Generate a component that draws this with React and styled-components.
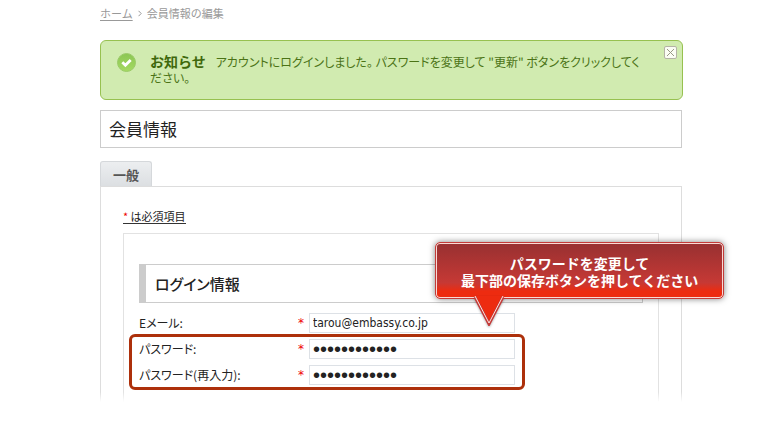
import React from 'react';
import styled, { createGlobalStyle } from 'styled-components';

const GlobalStyle = createGlobalStyle`
  *, *::before, *::after { box-sizing: border-box; }
  body {
    margin: 0;
    background: #fff;
    color: #222;
    font: 12px/16px "Noto Sans CJK JP", sans-serif;
    font-feature-settings: "palt";
  }
`;

const Page = styled.main`
  padding: 5px 91px 0 100px;
`;

const Breadcrumb = styled.nav`
  display: flex;
  align-items: center;
  gap: 5px;
  height: 16px;
  margin-bottom: 19px;
  color: #999;
  font-size: 11px;
  font-feature-settings: normal;
  a { color: #999; text-decoration: underline; text-underline-offset: 2px; }
`;

const Notice = styled.section`
  display: flex;
  align-items: flex-start;
  height: 60px;
  margin-right: -1px;
  padding: 11px 5px 0 16px;
  border: 1px solid #97c150;
  border-radius: 6px;
  background: #d1ebb0;
  color: #4b7316;
`;

const CheckIcon = styled.svg`
  flex: none;
  width: 20px;
  height: 20px;
`;

const NoticeText = styled.p`
  flex: 1;
  margin: 1px 14px 0 13px;
  font-size: 12px;
  line-height: 16px;
  strong {
    margin-right: 10px;
    font-size: 14px;
    font-feature-settings: normal;
    color: #3f680c;
  }
`;

const CloseButton = styled.button`
  flex: none;
  display: flex;
  align-items: center;
  justify-content: center;
  width: 13px;
  height: 13px;
  margin-top: -6px;
  padding: 0;
  border: 1px solid #b5b3a6;
  border-radius: 2px;
  background: #fbfdf4;
`;

const PageTitle = styled.h1`
  height: 38px;
  margin: 10px 0 13px;
  padding: 0 8px;
  border: 1px solid #ccc;
  font-size: 17px;
  font-weight: 400;
  line-height: 36px;
`;

const Tab = styled.button`
  display: block;
  height: 25px;
  padding: 2px 12px 0;
  border: 1px solid #d5d8db;
  border-bottom: 0;
  border-radius: 3px 3px 0 0;
  background: linear-gradient(#eceef0, #dcdfe2);
  color: #555;
  font: bold 13px/22px "Noto Sans CJK JP", sans-serif;
`;

const Panel = styled.section`
  position: relative;
  padding: 23px 22px 0;
  border: 1px solid #ddd;
  border-bottom: 0;
  &::after {
    content: "";
    position: absolute;
    left: -1px;
    right: -1px;
    bottom: 0;
    height: 10px;
    background: linear-gradient(rgba(255, 255, 255, 0), #fff);
  }
`;

const RequiredHint = styled.p`
  width: max-content;
  margin: 0 0 9px;
  border-bottom: 1px solid #333;
  font-size: 11px;
  line-height: 13px;
  font-feature-settings: normal;
`;

const Star = styled.span`
  color: #e00;
`;

const FieldStar = styled(Star)`
  font: 12px/16px "DejaVu Sans", sans-serif;
`;

const Form = styled.form`
  padding: 30px 15px 12px;
  border: 1px solid #e2e2e2;
  border-bottom: 0;
`;

const SectionTitle = styled.h2`
  height: 39px;
  margin: 0 0 10px;
  padding-left: 9px;
  border: 1px solid #ccc;
  border-left: 7px solid #ccc;
  font-size: 15px;
  font-weight: 500;
  line-height: 37px;
`;

const Row = styled.div`
  display: grid;
  grid-template-columns: 159px 11px 206px;
  align-items: center;
  height: 20px;
`;

const Label = styled.label`
  font-size: 12px;
`;

const TextInput = styled.input`
  width: 100%;
  height: 20px;
  padding: 0 3px;
  border: 1px solid #dde1e6;
  border-radius: 0;
  background: #fff;
  color: #222;
  font: ${({ type }) =>
    type === 'password' ? '20px "Liberation Sans"' : '12px "DejaVu Sans Condensed", "Noto Sans"'}, sans-serif;
`;

const Highlight = styled.div`
  position: relative;
  display: grid;
  gap: 6px;
  width: max-content;
  margin: 1px 0 0 -10px;
  padding: 2px 7px;
  border: 3px solid #ad300b;
  border-radius: 6px;
`;

const Callout = styled.aside`
  position: absolute;
  left: 303px;
  bottom: calc(100% + 38px);
  width: max-content;
  padding: 12px 25px 9px;
  border: 1px solid #c43a38;
  border-radius: 5px;
  background: linear-gradient(#973031, #c63935 72%, #ed2b10 88%);
  box-shadow: inset 0 0 0 1px #f9d9d5, 0 0 6px rgba(0, 0, 0, 0.5);
  color: #fff;
  font-size: 14px;
  font-weight: 700;
  line-height: 17px;
  text-align: center;
  font-feature-settings: normal;
`;

const CalloutTail = styled.svg`
  position: absolute;
  left: 38px;
  top: calc(100% - 2px);
  width: 30px;
  height: 30px;
  filter: drop-shadow(0 1px 1px rgba(0, 0, 0, 0.3));
`;

function Field({ id, label, ...input }) {
  return (
    <Row>
      <Label htmlFor={id}>{label}</Label>
      <FieldStar>*</FieldStar>
      <TextInput id={id} {...input} />
    </Row>
  );
}

export default function App() {
  return (
    <>
      <GlobalStyle />
      <Page>
        <Breadcrumb>
          <a href="#home">ホーム</a>
          <svg width="4" height="7" viewBox="0 0 4 7" fill="none" stroke="#999">
            <path d="M.5.8 3.2 3.5.5 6.2" />
          </svg>
          <span>会員情報の編集</span>
        </Breadcrumb>

        <Notice role="status">
          <CheckIcon viewBox="0 0 20 20">
            <defs>
              <linearGradient id="check" x1="0" y1="0" x2="0" y2="1">
                <stop offset="0" stopColor="#8bc653" />
                <stop offset="1" stopColor="#a5da62" />
              </linearGradient>
            </defs>
            <circle cx="9.5" cy="10.5" r="9" fill="url(#check)" stroke="#9bcb68" />
            <path d="m5.3 10.3 3.1 3 5.3-5.2" fill="none" stroke="#fff" strokeWidth="2.8" />
          </CheckIcon>
          <NoticeText>
            <strong>お知らせ</strong>
            アカウントにログインしました。 パスワードを変更して "更新" ボタンをクリックしてください。
          </NoticeText>
          <CloseButton type="button" aria-label="閉じる">
            <svg width="9" height="9" viewBox="0 0 9 9" stroke="#999a86">
              <path d="m1 1 7 7M8 1 1 8" />
            </svg>
          </CloseButton>
        </Notice>

        <PageTitle>会員情報</PageTitle>

        <Tab type="button">一般</Tab>
        <Panel>
          <RequiredHint><Star>*</Star> は必須項目</RequiredHint>
          <Form>
            <SectionTitle>ログイン情報</SectionTitle>
            <Field id="email" label="Eメール:" type="text" defaultValue="tarou@embassy.co.jp" />
            <Highlight>
              <Field id="password" label="パスワード:" type="password" defaultValue="abcdefghijkl" />
              <Field id="confirm" label="パスワード(再入力):" type="password" defaultValue="abcdefghijkl" />
              <Callout>
                パスワードを変更して<br />最下部の保存ボタンを押してください
                <CalloutTail viewBox="0 0 30 30">
                  <path d="M1 0 15 28 29 0Z" fill="#ed2b10" />
                  <path d="M1 1 15 28 29 1" fill="none" stroke="#c43a38" strokeWidth="3" />
                  <path d="M1 0 15 27 29 0" fill="none" stroke="#fbe3df" />
                </CalloutTail>
              </Callout>
            </Highlight>
          </Form>
        </Panel>
      </Page>
    </>
  );
}
